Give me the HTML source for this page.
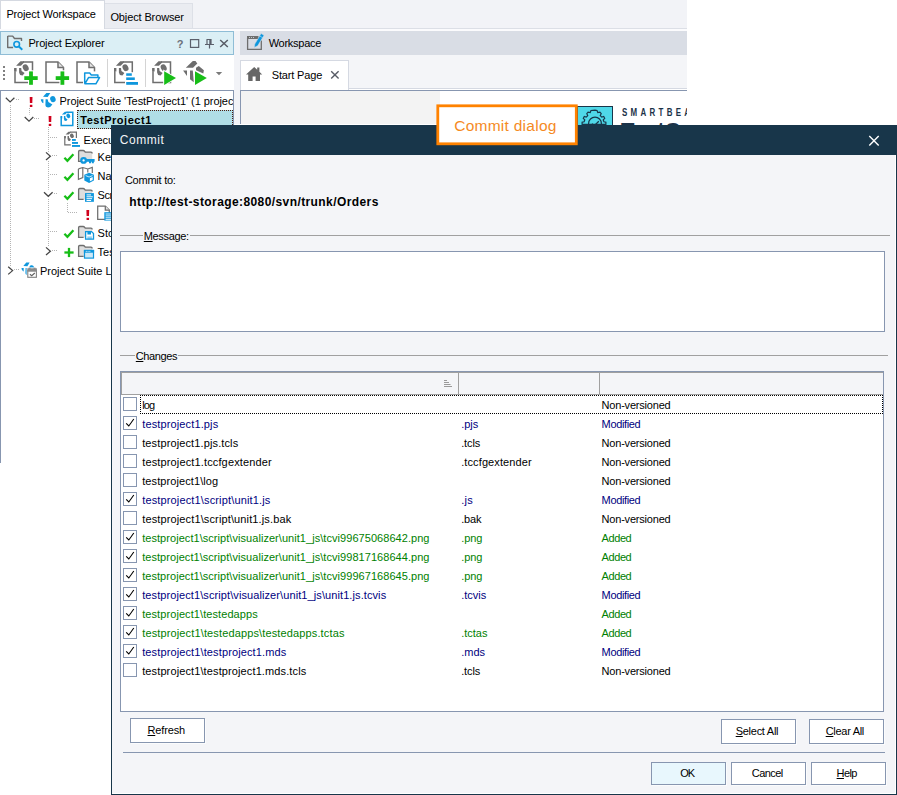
<!DOCTYPE html>
<html lang="en"><head><meta charset="utf-8"><title>Commit dialog</title>
<style>
html,body{margin:0;padding:0;background:#fff}
body{width:897px;height:795px;position:relative;overflow:hidden;font-family:"Liberation Sans",sans-serif;font-size:11px}
div,svg,span.t{position:absolute}
.t{white-space:pre;line-height:normal}
.app{left:0;top:0;width:687px;height:463px;overflow:hidden}
.dlg{left:0;top:0;width:897px;height:795px}
u{text-decoration:underline;text-underline-offset:1px}
</style></head>
<body>
<div class="app">
<div style="left:0px;top:0px;width:687px;height:31px;background:#F2F3F7;"></div>
<div style="left:0px;top:28px;width:687px;height:1px;background:#DCDFE6;"></div>
<div style="left:0px;top:29px;width:687px;height:2px;background:#FBFBFD;"></div>
<div style="left:104px;top:3px;width:89px;height:26px;background:#EAECF1;border:1px solid #DDE0E7;box-sizing:border-box;"></div>
<div style="left:0px;top:0px;width:105px;height:29px;background:#fff;border:1px solid #D5D9E1;box-sizing:border-box;border-bottom:none;"></div>
<span class="t" style="left:6.4px;top:8.00px;font-size:11px;color:#000;letter-spacing:-0.157px;">Project Workspace</span>
<span class="t" style="left:110.4px;top:11.00px;font-size:11px;color:#000;letter-spacing:-0.123px;">Object Browser</span>
<div style="left:234px;top:31px;width:453px;height:94px;background:#F2F3F7;"></div>
<div style="left:0px;top:31px;width:234px;height:24px;background:#DBEFF5;border:1px solid #8FBDD6;box-sizing:border-box;"></div>
<span class="t" style="left:28.4px;top:37.00px;font-size:11px;color:#000;letter-spacing:-0.131px;">Project Explorer</span>
<div style="left:240px;top:31px;width:447px;height:24px;background:#D9DDE5;"></div>
<span class="t" style="left:268.7px;top:37.00px;font-size:11px;color:#000;letter-spacing:-0.266px;">Workspace</span>
<div style="left:240px;top:55px;width:447px;height:35px;background:#F4F5F8;"></div>
<div style="left:349px;top:88px;width:338px;height:1px;background:#D5D9E2;"></div>
<div style="left:240px;top:89px;width:447px;height:1px;background:#fff;"></div>
<div style="left:240px;top:60px;width:109px;height:30px;background:#fff;border:1px solid #D5D9E2;box-sizing:border-box;border-bottom:none;"></div>
<span class="t" style="left:271.8px;top:69.00px;font-size:11px;color:#000;letter-spacing:-0.165px;">Start Page</span>
<div style="left:240px;top:90px;width:447px;height:35px;background:#F3F3F3;border:1px solid #8796B0;box-sizing:border-box;border-right:none;border-bottom:none;"></div>
<div style="left:440px;top:91px;width:247px;height:34px;background:#fff;"></div>
<div style="left:234px;top:124px;width:453px;height:1px;background:#fff;"></div>
<div style="left:0px;top:55px;width:234px;height:35px;background:#fff;"></div>
<div style="left:0px;top:90px;width:234px;height:373px;background:#fff;border:1px solid #8796B0;box-sizing:border-box;border-bottom:none;"></div>
<div style="left:77px;top:110px;width:156px;height:19px;background:#B0DEE6;border:1px dotted #4A1C10;box-sizing:border-box;"></div>
<span class="t" style="left:59.5px;top:95.00px;font-size:11px;color:#000;letter-spacing:-0.057px;width:173.5px;overflow:hidden;">Project Suite 'TestProject1' (1 project)</span>
<span class="t" style="left:80.3px;top:114.00px;font-size:11px;color:#000;font-weight:bold;letter-spacing:0.526px;">TestProject1</span>
<span class="t" style="left:83.6px;top:134.00px;font-size:11px;color:#000;">Execution Plan</span>
<span class="t" style="left:97.6px;top:151.00px;font-size:11px;color:#000;">KeywordTests</span>
<span class="t" style="left:97.6px;top:170.00px;font-size:11px;color:#000;">NameMapping</span>
<span class="t" style="left:97.6px;top:189.00px;font-size:11px;color:#000;letter-spacing:-0.425px;">Script</span>
<span class="t" style="left:97.6px;top:227.00px;font-size:11px;color:#000;">Stores</span>
<span class="t" style="left:97.6px;top:246.00px;font-size:11px;color:#000;">TestedApps</span>
<span class="t" style="left:40px;top:265.00px;font-size:11px;color:#000;">Project Suite Logs</span>
<span class="t" style="left:176.8px;top:38.00px;font-size:11px;color:#6A6F7A;font-weight:bold;">?</span>
<svg style="left:0;top:0" width="687" height="463" viewBox="0 0 687 463"><path d="M7.7 36.1h5l1.8 2.4h7v2.6M7.7 36.1v11.4h5.4" fill="none" stroke="#6E6E6E" stroke-width="1.4" stroke-linejoin="round"/><circle cx="16.7" cy="44.3" r="2.8" fill="#DBEFF5" stroke="#0F97DD" stroke-width="1.6"/><path d="M18.9 46.5l3.4 3.2" stroke="#0F97DD" stroke-width="1.9"/><rect x="190.500" y="39.600" width="8.200" height="7.800" fill="none" stroke="#5A5F6B" stroke-width="1.2"/><path d="M206.500 39.500h5M207 39.500v5M211 39v5.500M205 44.500h9M209.500 44.500v4" fill="none" stroke="#5A5F6B" stroke-width="1.2"/><rect x="209.300" y="39.500" width="1.700" height="5" fill="#5A5F6B"/><path d="M220.200 40l7.600 7M227.800 40l-7.600 7" stroke="#585C66" stroke-width="1.5"/><path d="M247.6 38v11.300h13.700v-8.800" fill="none" stroke="#6E6E6E" stroke-width="1.3"/><rect x="247" y="36" width="11.500" height="3" fill="#6E6E6E"/><rect x="249.100" y="37.100" width="0.9" height="0.9" fill="#D9DDE5"/><rect x="251.100" y="37.100" width="0.9" height="0.9" fill="#D9DDE5"/><rect x="253.100" y="37.100" width="0.9" height="0.9" fill="#D9DDE5"/><path d="M254.300 47.400l0.500 -3.300l6.300 -10.500l2.900 1.700l-6.300 10.500z" fill="#0F97DD" stroke="#D9DDE5" stroke-width="0.5"/><path d="M259.700 36l2.900 1.700" stroke="#BFE3F6" stroke-width="0.6"/><path d="M246 74.6l8.2 -7.6l3 2.8v-2.2h2.2v4.2l2.8 2.8h-2.2v6.4h-4.4v-4.4h-3v4.4h-4.4v-6.4z" fill="#666"/><path d="M331.200 71.200l7.400 7.400M338.600 71.200l-7.400 7.400" stroke="#585C66" stroke-width="1.4"/><rect x="3" y="66" width="2" height="2" fill="#808080"/><rect x="3" y="70" width="2" height="2" fill="#808080"/><rect x="3" y="74" width="2" height="2" fill="#808080"/><rect x="3" y="78" width="2" height="2" fill="#808080"/><path d="M23.00 62.1H32.5V82.4H15V68.30" fill="none" stroke="#6E6E6E" stroke-width="1.5"/><polygon points="16.10,65.70 20.50,61.30 24.00,61.30 24.00,62.90 23.60,62.90 20.90,65.70" fill="#6E6E6E"/><polygon points="14.25,68.00 16.60,68.00 16.60,71.50 14.25,70.70" fill="#6E6E6E"/><ellipse cx="25.70" cy="67.70" rx="2.80" ry="3.50" fill="#6E6E6E" transform="rotate(-28 25.70 67.70)"/><polygon points="19.10,68.00 21.20,68.00 21.60,71.00 24.60,73.00 22.60,75.40 20.10,75.00 19.10,72.50" fill="#6E6E6E"/><rect x="23.2" y="75.1" width="15.600000000000001" height="6.0" fill="#fff"/><rect x="28.0" y="70.3" width="6.0" height="15.600000000000001" fill="#fff"/><rect x="24.3" y="76.19999999999999" width="13.4" height="3.8" fill="#17BE17"/><rect x="29.1" y="71.39999999999999" width="3.8" height="13.4" fill="#17BE17"/><path d="M46 62.1H58.0L63.5 67.6V82.4H46Z" fill="#fff" stroke="#6E6E6E" stroke-width="1.5"/><path d="M58.0 62.1V67.6H63.5" fill="#E4E4E4" stroke="#6E6E6E" stroke-width="1.5"/><rect x="54.599999999999994" y="75.1" width="15.600000000000001" height="6.0" fill="#fff"/><rect x="59.4" y="70.3" width="6.0" height="15.600000000000001" fill="#fff"/><rect x="55.699999999999996" y="76.19999999999999" width="13.4" height="3.8" fill="#17BE17"/><rect x="60.5" y="71.39999999999999" width="3.8" height="13.4" fill="#17BE17"/><path d="M77 62.1H89.0L94.5 67.6V82.4H77Z" fill="#fff" stroke="#6E6E6E" stroke-width="1.5"/><path d="M89.0 62.1V67.6H94.5" fill="#E4E4E4" stroke="#6E6E6E" stroke-width="1.5"/><rect x="83" y="71.4" width="18" height="14" fill="#fff"/><path d="M84.7 83.6v-10.6h5l1.6 2h6.6v2.6M84.9 83.8l3.6 -6.2h11l-3.6 6.2z" fill="#fff" stroke="#0F97DD" stroke-width="1.5" stroke-linejoin="round"/><rect x="107" y="59" width="1" height="28" fill="#D4D4D4"/><path d="M122.80 62.1H132.3V82.4H114.8V68.30" fill="none" stroke="#6E6E6E" stroke-width="1.5"/><polygon points="115.90,65.70 120.30,61.30 123.80,61.30 123.80,62.90 123.40,62.90 120.70,65.70" fill="#6E6E6E"/><polygon points="114.05,68.00 116.40,68.00 116.40,71.50 114.05,70.70" fill="#6E6E6E"/><ellipse cx="125.50" cy="67.70" rx="2.80" ry="3.50" fill="#6E6E6E" transform="rotate(-28 125.50 67.70)"/><polygon points="118.90,68.00 121.00,68.00 121.40,71.00 124.40,73.00 122.40,75.40 119.90,75.00 118.90,72.50" fill="#6E6E6E"/><rect x="125" y="72.2" width="14" height="14" fill="#fff"/><rect x="126.2" y="73.3" width="5.6" height="2.5" fill="#0F97DD"/><rect x="126.2" y="77.4" width="8.6" height="2.6" fill="#0F97DD"/><rect x="126.2" y="82" width="11.8" height="2.8" fill="#0F97DD"/><rect x="145" y="59" width="1" height="28" fill="#D4D4D4"/><path d="M161.00 62.1H170.5V82.4H153V68.30" fill="none" stroke="#6E6E6E" stroke-width="1.5"/><polygon points="154.10,65.70 158.50,61.30 162.00,61.30 162.00,62.90 161.60,62.90 158.90,65.70" fill="#6E6E6E"/><polygon points="152.25,68.00 154.60,68.00 154.60,71.50 152.25,70.70" fill="#6E6E6E"/><ellipse cx="163.70" cy="67.70" rx="2.80" ry="3.50" fill="#6E6E6E" transform="rotate(-28 163.70 67.70)"/><polygon points="157.10,68.00 159.20,68.00 159.60,71.00 162.60,73.00 160.60,75.40 158.10,75.00 157.10,72.50" fill="#6E6E6E"/><polygon points="163.2,69.6 177.6,78 163.2,86.6" fill="#fff"/><polygon points="164.2,71.2 176,78.1 164.2,85" fill="#17BE17"/><polygon points="185.8,67.7 192.8,61.1 195.5,61.1 197.3,63.5 193,67.7" fill="#6E6E6E"/><polygon points="183.1,70.5 187,70.5 187,75.9" fill="#6E6E6E"/><polygon points="190,70.5 192.8,70.5 193.8,82.2 190,79.2" fill="#6E6E6E"/><polygon points="196,67.7 198.8,66 203.9,70.2 203.3,73.5 196,70.2" fill="#6E6E6E"/><polygon points="194,69.6 208.6,78 194,86.6" fill="#fff"/><polygon points="195,71.2 206.8,78.1 195,85" fill="#17BE17"/><polygon points="215.800,72 222.200,72 219,75.200" fill="#7A7A7A"/><path d="M10.5 103V267" stroke="#B4B4B4" stroke-width="1" stroke-dasharray="1 1"/><path d="M29.5 108V116" stroke="#B4B4B4" stroke-width="1" stroke-dasharray="1 1"/><path d="M48.5 127V247" stroke="#B4B4B4" stroke-width="1" stroke-dasharray="1 1"/><path d="M67.5 203V213" stroke="#B4B4B4" stroke-width="1" stroke-dasharray="1 1"/><path d="M14 99.5H19" stroke="#B4B4B4" stroke-width="1" stroke-dasharray="1 1"/><path d="M34 118.5H39" stroke="#B4B4B4" stroke-width="1" stroke-dasharray="1 1"/><path d="M50 137.5H57" stroke="#B4B4B4" stroke-width="1" stroke-dasharray="1 1"/><path d="M52 155.5H57" stroke="#B4B4B4" stroke-width="1" stroke-dasharray="1 1"/><path d="M50 174.5H57" stroke="#B4B4B4" stroke-width="1" stroke-dasharray="1 1"/><path d="M54 193.5H57" stroke="#B4B4B4" stroke-width="1" stroke-dasharray="1 1"/><path d="M68 212.5H77" stroke="#B4B4B4" stroke-width="1" stroke-dasharray="1 1"/><path d="M50 231.5H57" stroke="#B4B4B4" stroke-width="1" stroke-dasharray="1 1"/><path d="M52 250.5H57" stroke="#B4B4B4" stroke-width="1" stroke-dasharray="1 1"/><path d="M14 269.5H19" stroke="#B4B4B4" stroke-width="1" stroke-dasharray="1 1"/><rect x="5.3" y="95.3" width="9.6" height="9" fill="#fff"/><path d="M5.8 97.8L10.1 101.89999999999999L14.399999999999999 97.8" fill="none" stroke="#454545" stroke-width="1.25"/><path d="M29.700000000000003 97h2.8l-0.2 6h-2.400z" fill="#D0001C"/><rect x="29.85" y="104.8" width="2.5" height="2.2" fill="#D0001C"/><polygon points="43.00,96.80 46.40,92.90 50.30,92.90 47.70,97.10" fill="#0F97DD"/><polygon points="40.80,99.20 43.40,99.20 43.40,103.30 42.30,102.70 41.10,100.80" fill="#0F97DD"/><polygon points="45.60,99.20 47.60,99.20 48.40,102.00 52.40,104.50 50.20,107.00 48.00,107.60 46.00,106.80 45.40,105.30" fill="#0F97DD"/><ellipse cx="52.90" cy="99.10" rx="2.70" ry="3.10" fill="#0F97DD" transform="rotate(-20 52.90 99.10)"/><rect x="24.2" y="114.5" width="9.6" height="9" fill="#fff"/><path d="M24.7 117L29.0 121.1L33.3 117" fill="none" stroke="#454545" stroke-width="1.25"/><path d="M48.6 116h2.8l-0.2 6h-2.400z" fill="#D0001C"/><rect x="48.75" y="123.8" width="2.5" height="2.2" fill="#D0001C"/><path d="M66.50 112.2H72.8V125.4H61.2V116.31" fill="none" stroke="#0F97DD" stroke-width="1.5"/><polygon points="61.93,114.59 64.85,111.67 67.17,111.67 67.17,112.73 66.90,112.73 65.11,114.59" fill="#0F97DD"/><polygon points="60.70,116.11 62.26,116.11 62.26,118.43 60.70,117.90" fill="#0F97DD"/><ellipse cx="68.29" cy="115.91" rx="1.86" ry="2.32" fill="#0F97DD" transform="rotate(-28 68.29 115.91)"/><polygon points="63.92,116.11 65.31,116.11 65.57,118.10 67.56,119.43 66.24,121.02 64.58,120.75 63.92,119.09" fill="#0F97DD"/><path d="M70.10 132.2H76.39999999999999V144.79999999999998H64.8V136.31" fill="none" stroke="#6E6E6E" stroke-width="1.2"/><polygon points="65.53,134.59 68.45,131.67 70.77,131.67 70.77,132.73 70.50,132.73 68.71,134.59" fill="#6E6E6E"/><polygon points="64.30,136.11 65.86,136.11 65.86,138.43 64.30,137.90" fill="#6E6E6E"/><ellipse cx="71.89" cy="135.91" rx="1.86" ry="2.32" fill="#6E6E6E" transform="rotate(-28 71.89 135.91)"/><polygon points="67.52,136.11 68.91,136.11 69.17,138.10 71.16,139.43 69.84,141.02 68.18,140.75 67.52,139.09" fill="#6E6E6E"/><rect x="70.8" y="138" width="10" height="9" fill="#fff"/><rect x="72" y="139" width="3.800" height="1.900" fill="#0F97DD"/><rect x="72" y="142" width="6" height="1.900" fill="#0F97DD"/><rect x="72" y="145" width="8" height="1.900" fill="#0F97DD"/><rect x="44" y="151.9" width="8" height="8.6" fill="#fff"/><path d="M46 152.4L50.4 156.20000000000002L46 160.0" fill="none" stroke="#454545" stroke-width="1.25"/><path d="M64.4 157.8l3 3l6 -6.6" fill="none" stroke="#17BE17" stroke-width="2.3"/><path d="M78.6 161.4V151.6Q78.6 150.5 79.7 150.5H83Q84.2 150.5 84.7 151.5L85.2 152.1H91Q92.2 152.1 92.2 153.4V161.4Z" fill="#DEDEDE"/><path d="M83.6 161.4H78.6V151.6Q78.6 150.5 79.7 150.5H83Q84.2 150.5 84.7 151.5L85.2 152.1H91Q92.2 152.1 92.2 153.6" fill="none" stroke="#6E6E6E" stroke-width="1.3"/><circle cx="83.6" cy="160.4" r="2.3" fill="#fff" stroke="#0F97DD" stroke-width="2.3"/><path d="M86 159.100h8.600v2.600h-0.800v1.600h-2v-1.600h-0.800v1.600h-2v-1.600h-3z" fill="#0F97DD"/><path d="M64.4 176.8l3 3l6 -6.6" fill="none" stroke="#17BE17" stroke-width="2.3"/><path d="M78.400 168.900l4.400 -1.400l5 1.500l4.500 -1.600v5.600M78.400 168.900v10.400l4.400 -1.700v-10.100M87.800 169v3.500" fill="none" stroke="#6E6E6E" stroke-width="1.15"/><polygon points="89.100,172.700 93.900,174.800 93.900,180.600 89.100,182.900 84.300,180.600 84.300,174.800" fill="#0F97DD"/><path d="M85.700 175.600l3.400 1.400l3.400 -1.400" fill="none" stroke="#fff" stroke-width="0.8"/><polygon points="89.900,178.200 92.700,177.100 92.700,180 89.900,181.200" fill="#fff"/><rect x="43.5" y="189.7" width="9.6" height="9" fill="#fff"/><path d="M44 192.2L48.3 196.29999999999998L52.6 192.2" fill="none" stroke="#454545" stroke-width="1.25"/><path d="M64.4 195.8l3 3l6 -6.6" fill="none" stroke="#17BE17" stroke-width="2.3"/><path d="M78.6 199.4V189.6Q78.6 188.5 79.7 188.5H83Q84.2 188.5 84.7 189.5L85.2 190.1H91Q92.2 190.1 92.2 191.4V199.4Z" fill="#DEDEDE"/><path d="M83.6 199.4H78.6V189.6Q78.6 188.5 79.7 188.5H83Q84.2 188.5 84.7 189.5L85.2 190.1H91Q92.2 190.1 92.2 191.6" fill="none" stroke="#6E6E6E" stroke-width="1.3"/><rect x="85" y="193.100" width="8.900" height="8.700" fill="#0F97DD"/><path d="M86.500 194.900h4.600M86.500 196.800h6.300M86.500 198.700h5.600M86.500 200.500h4.600" stroke="#fff" stroke-width="1"/><path d="M86.39999999999999 210h2.8l-0.2 6h-2.400z" fill="#D0001C"/><rect x="86.55" y="217.8" width="2.5" height="2.2" fill="#D0001C"/><path d="M97.7 206H105.3L109.3 210V219.4H97.7Z" fill="#fff" stroke="#6E6E6E" stroke-width="1.25"/><path d="M105.3 206V210H109.3" fill="#E4E4E4" stroke="#6E6E6E" stroke-width="1.25"/><rect x="104.300" y="212.200" width="9" height="8.400" fill="#0F97DD"/><path d="M105.600 214h6M105.600 215.900h6M105.600 217.800h6M105.600 219.600h6" stroke="#fff" stroke-width="0.85"/><path d="M64.4 233.8l3 3l6 -6.6" fill="none" stroke="#17BE17" stroke-width="2.3"/><path d="M78.6 237.4V227.6Q78.6 226.5 79.7 226.5H83Q84.2 226.5 84.7 227.5L85.2 228.1H91Q92.2 228.1 92.2 229.4V237.4Z" fill="#DEDEDE"/><path d="M83.6 237.4H78.6V227.6Q78.6 226.5 79.7 226.5H83Q84.2 226.5 84.7 227.5L85.2 228.1H91Q92.2 228.1 92.2 229.6" fill="none" stroke="#6E6E6E" stroke-width="1.3"/><path d="M85.600 231.600h5.900l2 2v5.600h-7.900z" fill="#fff" stroke="#0F97DD" stroke-width="1.3"/><rect x="87.400" y="231.600" width="3.600" height="2.900" fill="#0F97DD"/><rect x="87.300" y="236.400" width="4.600" height="2.800" fill="#0F97DD" opacity="0.45"/><rect x="44" y="246.9" width="8" height="8.6" fill="#fff"/><path d="M46 247.4L50.4 251.20000000000002L46 255.0" fill="none" stroke="#454545" stroke-width="1.25"/><rect x="64.4" y="251.35" width="9.2" height="2.3" fill="#17BE17"/><rect x="67.85" y="247.9" width="2.3" height="9.2" fill="#17BE17"/><path d="M78.6 256.4V246.6Q78.6 245.5 79.7 245.5H83Q84.2 245.5 84.7 246.5L85.2 247.1H91Q92.2 247.1 92.2 248.4V256.4Z" fill="#DEDEDE"/><path d="M83.6 256.4H78.6V246.6Q78.6 245.5 79.7 245.5H83Q84.2 245.5 84.7 246.5L85.2 247.1H91Q92.2 247.1 92.2 248.6" fill="none" stroke="#6E6E6E" stroke-width="1.3"/><rect x="84.500" y="250.500" width="9" height="7.600" fill="#CDE9F8" stroke="#0F97DD" stroke-width="1.2"/><rect x="83.900" y="249.900" width="10.200" height="2.800" fill="#0F97DD"/><rect x="85.800" y="250.900" width="0.900" height="0.900" fill="#fff"/><rect x="87.600" y="250.900" width="0.900" height="0.900" fill="#fff"/><rect x="89.400" y="250.900" width="0.900" height="0.900" fill="#fff"/><rect x="6.199999999999999" y="266.3" width="8" height="8.6" fill="#fff"/><path d="M8.2 266.8L12.6 270.6L8.2 274.40000000000003" fill="none" stroke="#454545" stroke-width="1.25"/><polygon points="23.35,265.90 26.27,262.54 29.63,262.54 27.39,266.16" fill="#0F97DD"/><polygon points="21.46,267.96 23.69,267.96 23.69,271.49 22.75,270.97 21.72,269.34" fill="#0F97DD"/><polygon points="25.59,267.96 27.31,267.96 27.99,270.37 31.43,272.52 29.54,274.67 27.65,275.19 25.93,274.50 25.41,273.21" fill="#0F97DD"/><ellipse cx="31.86" cy="267.88" rx="2.32" ry="2.67" fill="#0F97DD" transform="rotate(-20 31.86 267.88)"/><rect x="26.600" y="267.400" width="11" height="11" fill="#fff"/><rect x="27.800" y="270.500" width="8.600" height="6.800" fill="#fff" stroke="#808080" stroke-width="1.1"/><rect x="27.300" y="268.300" width="9.600" height="3.400" fill="#8A8A8A"/><rect x="28.600" y="267.700" width="2" height="1.200" fill="#8A8A8A"/><rect x="33.600" y="267.700" width="2" height="1.200" fill="#8A8A8A"/><path d="M29.900 274.300l1.800 1.400l3.100 -2.700" fill="none" stroke="#606060" stroke-width="1.1"/></svg>
<div style="left:577px;top:106px;width:36px;height:30px;background:#4FD8E8;border:1px solid #18364A;box-sizing:border-box;"></div>
<svg style="left:577px;top:106px" width="36" height="19" viewBox="577 106 36 19"><path d="M595 110.200l2 .3l.8 2l2.100 -.4l1.300 1.600l-.9 1.900l1.500 1.500l1.900 -.6l1 1.800l-1.500 1.500l.7 2l2 .4v2.100h-23.800v-2.100l2 -.4l.7 -2l-1.500 -1.500l1 -1.800l1.900 .6l1.500 -1.500l-.9 -1.900l1.300 -1.600l2.100 .4l.8 -2z" fill="none" stroke="#18364A" stroke-width="1.2"/><circle cx="595" cy="123.500" r="6.4" fill="none" stroke="#18364A" stroke-width="1.2"/><path d="M592 123.600l2.200 2.200l4.600 -4.600" fill="none" stroke="#18364A" stroke-width="1.3"/></svg>
<span class="t" style="left:622.4px;top:106.00px;font-size:11px;color:#1B3349;font-weight:bold;letter-spacing:4.6px;transform:scaleX(.72);transform-origin:0 0;">SMARTBEAR</span>
<span class="t" style="left:621px;top:118.00px;font-size:22px;color:#1B3349;font-weight:bold;">TestComplete</span>
</div>
<div class="dlg">
<div style="left:111px;top:125px;width:786px;height:670px;background:#F4F5F8;border:1px solid #18364A;box-sizing:border-box;"></div>
<div style="left:112px;top:155px;width:784px;height:639px;border:1px solid #fff;box-sizing:border-box;border-top:none;border-left:none;"></div>
<div style="left:111px;top:125px;width:786px;height:30px;background:#18364A;"></div>
<span class="t" style="left:119.8px;top:133.00px;font-size:12px;color:#F3F5F7;letter-spacing:0.531px;">Commit</span>
<svg style="left:868px;top:135px" width="12" height="12" viewBox="868 135 12 12"><path d="M869.300 136.100l9.400 9.400M878.700 136.100l-9.400 9.400" stroke="#fff" stroke-width="1.4"/></svg>
<span class="t" style="left:124.9px;top:174.00px;font-size:11px;color:#000;letter-spacing:-0.243px;">Commit to:</span>
<span class="t" style="left:129.3px;top:195.00px;font-size:12px;color:#000;font-weight:bold;letter-spacing:0.407px;">http://test-storage:8080/svn/trunk/Orders</span>
<div style="left:120px;top:235px;width:770px;height:1px;background:#A0A0A0;"></div>
<div style="left:143px;top:229px;width:47px;height:13px;background:#F4F5F8;"></div>
<span class="t" style="left:143.8px;top:230.00px;font-size:11px;color:#000;letter-spacing:-0.358px;"><u>M</u>essage:</span>
<div style="left:120px;top:251px;width:765px;height:81px;background:#fff;border:1px solid #8796B0;box-sizing:border-box;"></div>
<div style="left:120px;top:355px;width:768px;height:1px;background:#A0A0A0;"></div>
<div style="left:135px;top:349px;width:43px;height:13px;background:#F4F5F8;"></div>
<span class="t" style="left:135.8px;top:350.00px;font-size:11px;color:#000;letter-spacing:-0.391px;"><u>C</u>hanges</span>
<div style="left:120px;top:371px;width:764px;height:341px;background:#fff;border:1px solid #8796B0;box-sizing:border-box;"></div>
<div style="left:121px;top:372px;width:762px;height:23px;background:#F4F5F8;border:1px solid #A0A0A0;box-sizing:border-box;border-right:none;"></div>
<div style="left:458px;top:373px;width:1px;height:21px;background:#A0A0A0;"></div>
<div style="left:599px;top:373px;width:1px;height:21px;background:#A0A0A0;"></div>
<svg style="left:443px;top:379px" width="10" height="9" viewBox="443 379 10 9"><path d="M444 380.500h3M444 382.500h5M444 384.500h6.500M444 386.500h8" stroke="#9A9A9A" stroke-width="1"/></svg>
<div style="left:123px;top:397px;width:14px;height:14px;background:#fff;border:1px solid #8796B0;box-sizing:border-box;"></div>
<span class="t" style="left:142.2px;top:399.00px;font-size:11px;color:#000;letter-spacing:-0.844px;">log</span>
<span class="t" style="left:601.6px;top:399.00px;font-size:11px;color:#000;letter-spacing:-0.204px;">Non-versioned</span>
<div style="left:123px;top:416px;width:14px;height:14px;background:#fff;border:1px solid #8796B0;box-sizing:border-box;"></div>
<span class="t" style="left:142.2px;top:418.00px;font-size:11px;color:#000080;letter-spacing:0.134px;">testproject1.pjs</span>
<span class="t" style="left:461.2px;top:418.00px;font-size:11px;color:#000080;letter-spacing:-0.042px;">.pjs</span>
<span class="t" style="left:601.6px;top:418.00px;font-size:11px;color:#000080;letter-spacing:-0.368px;">Modified</span>
<div style="left:123px;top:435px;width:14px;height:14px;background:#fff;border:1px solid #8796B0;box-sizing:border-box;"></div>
<span class="t" style="left:142.2px;top:437.00px;font-size:11px;color:#000;letter-spacing:0.123px;">testproject1.pjs.tcls</span>
<span class="t" style="left:461.2px;top:437.00px;font-size:11px;color:#000;letter-spacing:-0.141px;">.tcls</span>
<span class="t" style="left:601.6px;top:437.00px;font-size:11px;color:#000;letter-spacing:-0.204px;">Non-versioned</span>
<div style="left:123px;top:454px;width:14px;height:14px;background:#fff;border:1px solid #8796B0;box-sizing:border-box;"></div>
<span class="t" style="left:142.2px;top:456.00px;font-size:11px;color:#000;letter-spacing:0.141px;">testproject1.tccfgextender</span>
<span class="t" style="left:461.2px;top:456.00px;font-size:11px;color:#000;letter-spacing:0.108px;">.tccfgextender</span>
<span class="t" style="left:601.6px;top:456.00px;font-size:11px;color:#000;letter-spacing:-0.204px;">Non-versioned</span>
<div style="left:123px;top:473px;width:14px;height:14px;background:#fff;border:1px solid #8796B0;box-sizing:border-box;"></div>
<span class="t" style="left:142.2px;top:475.00px;font-size:11px;color:#000;letter-spacing:0.093px;">testproject1\log</span>
<span class="t" style="left:601.6px;top:475.00px;font-size:11px;color:#000;letter-spacing:-0.204px;">Non-versioned</span>
<div style="left:123px;top:492px;width:14px;height:14px;background:#fff;border:1px solid #8796B0;box-sizing:border-box;"></div>
<span class="t" style="left:142.2px;top:494.00px;font-size:11px;color:#000080;letter-spacing:0.147px;">testproject1\script\unit1.js</span>
<span class="t" style="left:461.2px;top:494.00px;font-size:11px;color:#000080;letter-spacing:0.250px;">.js</span>
<span class="t" style="left:601.6px;top:494.00px;font-size:11px;color:#000080;letter-spacing:-0.368px;">Modified</span>
<div style="left:123px;top:511px;width:14px;height:14px;background:#fff;border:1px solid #8796B0;box-sizing:border-box;"></div>
<span class="t" style="left:142.2px;top:513.00px;font-size:11px;color:#000;letter-spacing:0.132px;">testproject1\script\unit1.js.bak</span>
<span class="t" style="left:461.2px;top:513.00px;font-size:11px;color:#000;letter-spacing:-0.132px;">.bak</span>
<span class="t" style="left:601.6px;top:513.00px;font-size:11px;color:#000;letter-spacing:-0.204px;">Non-versioned</span>
<div style="left:123px;top:530px;width:14px;height:14px;background:#fff;border:1px solid #8796B0;box-sizing:border-box;"></div>
<span class="t" style="left:142.2px;top:532.00px;font-size:11px;color:#008000;letter-spacing:0.051px;">testproject1\script\visualizer\unit1_js\tcvi99675068642.png</span>
<span class="t" style="left:461.2px;top:532.00px;font-size:11px;color:#008000;letter-spacing:-0.074px;">.png</span>
<span class="t" style="left:601.6px;top:532.00px;font-size:11px;color:#008000;letter-spacing:-0.428px;">Added</span>
<div style="left:123px;top:549px;width:14px;height:14px;background:#fff;border:1px solid #8796B0;box-sizing:border-box;"></div>
<span class="t" style="left:142.2px;top:551.00px;font-size:11px;color:#008000;letter-spacing:0.051px;">testproject1\script\visualizer\unit1_js\tcvi99817168644.png</span>
<span class="t" style="left:461.2px;top:551.00px;font-size:11px;color:#008000;letter-spacing:-0.074px;">.png</span>
<span class="t" style="left:601.6px;top:551.00px;font-size:11px;color:#008000;letter-spacing:-0.428px;">Added</span>
<div style="left:123px;top:568px;width:14px;height:14px;background:#fff;border:1px solid #8796B0;box-sizing:border-box;"></div>
<span class="t" style="left:142.2px;top:570.00px;font-size:11px;color:#008000;letter-spacing:0.051px;">testproject1\script\visualizer\unit1_js\tcvi99967168645.png</span>
<span class="t" style="left:461.2px;top:570.00px;font-size:11px;color:#008000;letter-spacing:-0.074px;">.png</span>
<span class="t" style="left:601.6px;top:570.00px;font-size:11px;color:#008000;letter-spacing:-0.428px;">Added</span>
<div style="left:123px;top:587px;width:14px;height:14px;background:#fff;border:1px solid #8796B0;box-sizing:border-box;"></div>
<span class="t" style="left:142.2px;top:589.00px;font-size:11px;color:#000080;letter-spacing:0.093px;">testproject1\script\visualizer\unit1_js\unit1.js.tcvis</span>
<span class="t" style="left:461.2px;top:589.00px;font-size:11px;color:#000080;">.tcvis</span>
<span class="t" style="left:601.6px;top:589.00px;font-size:11px;color:#000080;letter-spacing:-0.368px;">Modified</span>
<div style="left:123px;top:606px;width:14px;height:14px;background:#fff;border:1px solid #8796B0;box-sizing:border-box;"></div>
<span class="t" style="left:142.2px;top:608.00px;font-size:11px;color:#008000;letter-spacing:0.080px;">testproject1\testedapps</span>
<span class="t" style="left:601.6px;top:608.00px;font-size:11px;color:#008000;letter-spacing:-0.428px;">Added</span>
<div style="left:123px;top:625px;width:14px;height:14px;background:#fff;border:1px solid #8796B0;box-sizing:border-box;"></div>
<span class="t" style="left:142.2px;top:627.00px;font-size:11px;color:#008000;letter-spacing:0.136px;">testproject1\testedapps\testedapps.tctas</span>
<span class="t" style="left:461.2px;top:627.00px;font-size:11px;color:#008000;">.tctas</span>
<span class="t" style="left:601.6px;top:627.00px;font-size:11px;color:#008000;letter-spacing:-0.428px;">Added</span>
<div style="left:123px;top:644px;width:14px;height:14px;background:#fff;border:1px solid #8796B0;box-sizing:border-box;"></div>
<span class="t" style="left:142.2px;top:646.00px;font-size:11px;color:#000080;letter-spacing:0.121px;">testproject1\testproject1.mds</span>
<span class="t" style="left:461.2px;top:646.00px;font-size:11px;color:#000080;">.mds</span>
<span class="t" style="left:601.6px;top:646.00px;font-size:11px;color:#000080;letter-spacing:-0.368px;">Modified</span>
<div style="left:123px;top:663px;width:14px;height:14px;background:#fff;border:1px solid #8796B0;box-sizing:border-box;"></div>
<span class="t" style="left:142.2px;top:665.00px;font-size:11px;color:#000;letter-spacing:0.116px;">testproject1\testproject1.mds.tcls</span>
<span class="t" style="left:461.2px;top:665.00px;font-size:11px;color:#000;letter-spacing:-0.141px;">.tcls</span>
<span class="t" style="left:601.6px;top:665.00px;font-size:11px;color:#000;letter-spacing:-0.204px;">Non-versioned</span>
<svg style="left:0;top:0" width="897" height="795" viewBox="0 0 897 795"><path d="M126.200 423.3l2.600 2.700l5 -7" fill="none" stroke="#000" stroke-width="1.1"/><path d="M126.200 499.3l2.600 2.700l5 -7" fill="none" stroke="#000" stroke-width="1.1"/><path d="M126.200 537.3l2.600 2.700l5 -7" fill="none" stroke="#000" stroke-width="1.1"/><path d="M126.200 556.3l2.600 2.700l5 -7" fill="none" stroke="#000" stroke-width="1.1"/><path d="M126.200 575.3l2.600 2.700l5 -7" fill="none" stroke="#000" stroke-width="1.1"/><path d="M126.200 594.3l2.600 2.700l5 -7" fill="none" stroke="#000" stroke-width="1.1"/><path d="M126.200 613.3l2.600 2.700l5 -7" fill="none" stroke="#000" stroke-width="1.1"/><path d="M126.200 632.3l2.600 2.700l5 -7" fill="none" stroke="#000" stroke-width="1.1"/><path d="M126.200 651.3l2.600 2.700l5 -7" fill="none" stroke="#000" stroke-width="1.1"/></svg>
<div style="left:140px;top:395px;width:743px;height:19px;border:1px dotted #000;box-sizing:border-box;"></div>
<div style="left:130px;top:718px;width:75px;height:25px;background:#fff;border:1px solid #8796B0;box-sizing:border-box;"></div>
<div style="left:131px;top:743px;width:75px;height:1px;background:#FBFCFD;"></div>
<div style="left:205px;top:719px;width:1px;height:25px;background:#FBFCFD;"></div>
<span class="t" style="left:147.5px;top:724.00px;font-size:11px;color:#000;letter-spacing:-0.139px;"><u>R</u>efresh</span>
<div style="left:721px;top:719px;width:75px;height:25px;background:#fff;border:1px solid #8796B0;box-sizing:border-box;"></div>
<div style="left:722px;top:744px;width:75px;height:1px;background:#FBFCFD;"></div>
<div style="left:796px;top:720px;width:1px;height:25px;background:#FBFCFD;"></div>
<span class="t" style="left:735.7px;top:725.00px;font-size:11px;color:#000;letter-spacing:-0.272px;"><u>S</u>elect All</span>
<div style="left:809px;top:719px;width:75px;height:25px;background:#fff;border:1px solid #8796B0;box-sizing:border-box;"></div>
<div style="left:810px;top:744px;width:75px;height:1px;background:#FBFCFD;"></div>
<div style="left:884px;top:720px;width:1px;height:25px;background:#FBFCFD;"></div>
<span class="t" style="left:825.7px;top:725.00px;font-size:11px;color:#000;letter-spacing:-0.296px;"><u>C</u>lear All</span>
<div style="left:123px;top:752px;width:762px;height:1px;background:#8796B0;"></div>
<div style="left:651px;top:762px;width:75px;height:23px;background:#E8F7FD;border:1px solid #8796B0;box-sizing:border-box;"></div>
<div style="left:652px;top:785px;width:75px;height:1px;background:#FBFCFD;"></div>
<div style="left:726px;top:763px;width:1px;height:23px;background:#FBFCFD;"></div>
<span class="t" style="left:680.2px;top:767.00px;font-size:11px;color:#000;letter-spacing:-1.106px;">OK</span>
<div style="left:731px;top:762px;width:75px;height:23px;background:#fff;border:1px solid #8796B0;box-sizing:border-box;"></div>
<div style="left:732px;top:785px;width:75px;height:1px;background:#FBFCFD;"></div>
<div style="left:806px;top:763px;width:1px;height:23px;background:#FBFCFD;"></div>
<span class="t" style="left:751.8px;top:767.00px;font-size:11px;color:#000;letter-spacing:-0.550px;">Cancel</span>
<div style="left:811px;top:762px;width:75px;height:23px;background:#fff;border:1px solid #8796B0;box-sizing:border-box;"></div>
<div style="left:812px;top:785px;width:75px;height:1px;background:#FBFCFD;"></div>
<div style="left:886px;top:763px;width:1px;height:23px;background:#FBFCFD;"></div>
<span class="t" style="left:836.6px;top:767.00px;font-size:11px;color:#000;letter-spacing:-0.608px;"><u>H</u>elp</span>
</div>
<svg style="left:430px;top:100px" width="154" height="50" viewBox="430 100 154 50"><rect x="437.8" y="105.8" width="138.500" height="38" fill="#fff" stroke="#FF8200" stroke-width="2.8"/></svg>
<span class="t" style="left:454.2px;top:117.00px;font-size:15.5px;color:#F58A1F;letter-spacing:0.261px;">Commit dialog</span>
</body></html>
